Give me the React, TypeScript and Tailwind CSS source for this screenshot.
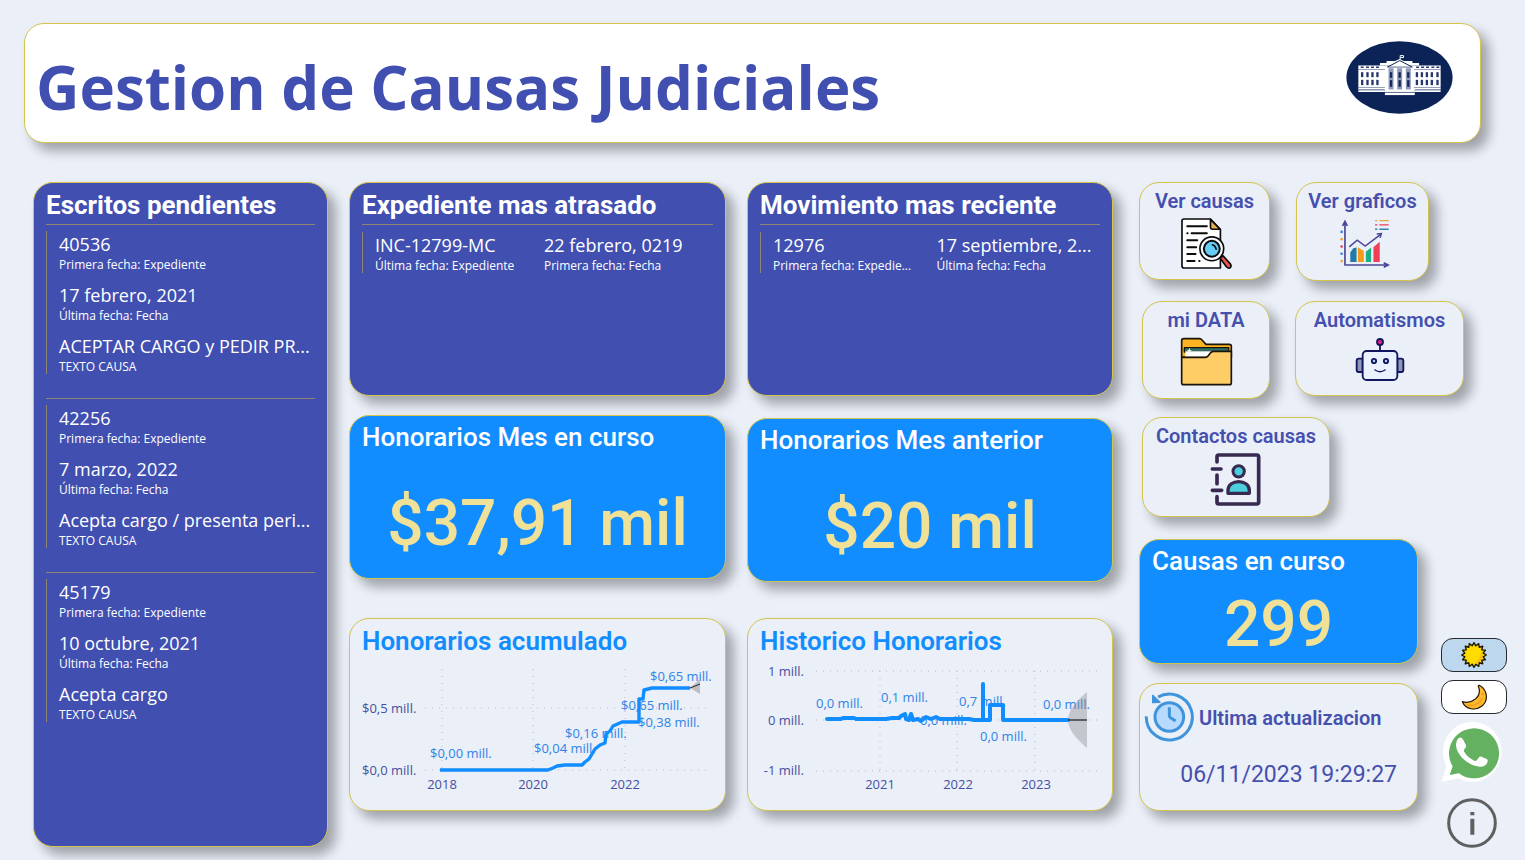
import type { ReactNode } from "react";

const segoe = "font-['Open_Sans',sans-serif]";
const cardBase = "rounded-[20px] border border-[#d3c44c] shadow-[8px_8px_12px_rgba(0,0,0,0.32)]";

type Field = { value: string; label: string };

const pendientes: Field[][] = [
  [
    { value: "40536", label: "Primera fecha: Expediente" },
    { value: "17 febrero, 2021", label: "Última fecha: Fecha" },
    { value: "ACEPTAR CARGO y PEDIR PR...", label: "TEXTO CAUSA" },
  ],
  [
    { value: "42256", label: "Primera fecha: Expediente" },
    { value: "7 marzo, 2022", label: "Última fecha: Fecha" },
    { value: "Acepta cargo / presenta peri...", label: "TEXTO CAUSA" },
  ],
  [
    { value: "45179", label: "Primera fecha: Expediente" },
    { value: "10 octubre, 2021", label: "Última fecha: Fecha" },
    { value: "Acepta cargo", label: "TEXTO CAUSA" },
  ],
];

function FieldView({ value, label }: Field) {
  return (
    <div className={`min-w-0 flex-1 whitespace-nowrap text-white ${segoe}`}>
      <p className="text-[18px] leading-[27px]">{value}</p>
      <p className="text-[12px] leading-[14px]">{label}</p>
    </div>
  );
}

function ListCard({ title, className, children }: { title: string; className: string; children: ReactNode }) {
  return (
    <section className={`bg-[#414fb1] px-3 pt-[6px] ${cardBase} ${className}`}>
      <h2 className="mb-[3px] text-[26px] leading-8 font-bold whitespace-nowrap text-white">{title}</h2>
      {children}
    </section>
  );
}

function RowRecord({ fields }: { fields: Field[] }) {
  return (
    <div className="border-t border-[#8f8672] pt-[7px]">
      <div className="flex border-l border-[#8f8672] pl-3">
        {fields.map((f) => (
          <FieldView key={f.label} {...f} />
        ))}
      </div>
    </div>
  );
}

function MoneyCard({ title, value }: { title: string; value: string }) {
  return (
    <section className={`flex h-[164px] flex-col bg-[#118dff] px-3 pt-[5px] ${cardBase}`}>
      <h2 className="text-[26px] leading-8 font-medium whitespace-nowrap text-white">{title}</h2>
      <p className="flex flex-1 items-center justify-center pt-4 text-[64px] leading-[72px] font-medium whitespace-nowrap text-[#f0e199]">
        {value}
      </p>
    </section>
  );
}

function ChartCard({ title, children }: { title: string; children: ReactNode }) {
  return (
    <section className={`h-[193px] bg-[#eaeff8] ${cardBase}`}>
      <h2 className="px-3 pt-[5px] pb-px text-[26px] leading-[34px] font-semibold whitespace-nowrap text-[#118dff]">{title}</h2>
      {children}
    </section>
  );
}

type Label = { x: number; y: number; t: string };

function ChartTexts({ items, anchor, fill }: { items: Label[]; anchor: "start" | "middle" | "end"; fill: string }) {
  return (
    <g fill={fill} textAnchor={anchor} className={`text-[13px] ${segoe}`}>
      {items.map((l) => (
        <text key={`${l.x}-${l.y}`} x={l.x} y={l.y}>
          {l.t}
        </text>
      ))}
    </g>
  );
}

function AcumuladoChart() {
  return (
    <svg viewBox="0 0 375 140" className="block w-full" role="img" aria-label="Honorarios acumulado">
      <path
        d="M92 10V112M183 10V112M275 10V112M75 49H361M75 111H361"
        stroke="#c9ccd6"
        strokeDasharray="1 6"
        strokeWidth="1.5"
        fill="none"
      />
      <ChartTexts
        anchor="start"
        fill="#2f84e6"
        items={[
          { x: 300, y: 22, t: "$0,65 mill." },
          { x: 271, y: 51, t: "$0,65 mill." },
          { x: 288, y: 68, t: "$0,38 mill." },
          { x: 215, y: 79, t: "$0,16 mill." },
          { x: 184, y: 94, t: "$0,04 mill." },
          { x: 80, y: 99, t: "$0,00 mill." },
        ]}
      />
      <path d="M340 29L350 20V35Z" fill="#bfbfc3" />
      <path
        d="M90 111H198L203 109L207 107L215 106H232L235 103L239 100L242 95L245 90L250 86L255 84L256 75L260 72L263 67L272 63H289V40H293L294 31L302 29H340"
        stroke="#118dff"
        strokeWidth="3.4"
        strokeLinejoin="round"
        fill="none"
      />
      <path d="M340 29L350 25" stroke="#222" />
      <ChartTexts
        anchor="start"
        fill="#464f9f"
        items={[
          { x: 12, y: 54, t: "$0,5 mill." },
          { x: 12, y: 116, t: "$0,0 mill." },
        ]}
      />
      <ChartTexts
        anchor="middle"
        fill="#464f9f"
        items={[
          { x: 92, y: 130, t: "2018" },
          { x: 183, y: 130, t: "2020" },
          { x: 275, y: 130, t: "2022" },
        ]}
      />
    </svg>
  );
}

function HistoricoChart() {
  return (
    <svg viewBox="0 0 364 140" className="block w-full" role="img" aria-label="Historico Honorarios">
      <path
        d="M132 12V112M209 12V112M287 12V112M68 12H352M68 61H352M68 112H352"
        stroke="#c9ccd6"
        strokeDasharray="1 6"
        strokeWidth="1.5"
        fill="none"
      />
      <ChartTexts
        anchor="start"
        fill="#2f84e6"
        items={[
          { x: 68, y: 49, t: "0,0 mill." },
          { x: 133, y: 43, t: "0,1 mill." },
          { x: 211, y: 47, t: "0,7 mill." },
          { x: 172, y: 66, t: "0,0 mill." },
          { x: 232, y: 82, t: "0,0 mill." },
          { x: 295, y: 50, t: "0,0 mill." },
        ]}
      />
      <path d="M320 61C320 52 328 42 339 33V89C328 80 320 70 320 61Z" fill="#8a8a8a" fillOpacity="0.4" />
      <path
        d="M79 60H93L95 59H106L108 60H138L144 59H151L153 57L157 55L158 60L161 61L163 55L165 61L170 60L173 62L178 58L183 60L188 58L192 60H221L226 61H235V25V61H242V46H255V61H320"
        stroke="#118dff"
        strokeWidth="4"
        strokeLinejoin="round"
        strokeLinecap="round"
        fill="none"
      />
      <path d="M320 61H339" stroke="#333" strokeWidth="1.4" />
      <ChartTexts
        anchor="end"
        fill="#464f9f"
        items={[
          { x: 56, y: 17, t: "1 mill." },
          { x: 56, y: 66, t: "0 mill." },
          { x: 56, y: 116, t: "-1 mill." },
        ]}
      />
      <ChartTexts
        anchor="middle"
        fill="#464f9f"
        items={[
          { x: 132, y: 130, t: "2021" },
          { x: 210, y: 130, t: "2022" },
          { x: 288, y: 130, t: "2023" },
        ]}
      />
    </svg>
  );
}

function Tile({ label, className, children }: { label: string; className: string; children: ReactNode }) {
  return (
    <button
      type="button"
      className={`flex flex-col items-center bg-[#eaeff8] pt-[6px] text-[20px] leading-6 font-semibold whitespace-nowrap text-[#464fae] ${cardBase} ${className}`}
    >
      {label}
      {children}
    </button>
  );
}

function Logo() {
  const parapets = [62, 78, 93, 108, 229, 244, 259, 275, 290];
  const windows = [63, 79, 94, 109, 228, 243, 258, 273, 290];
  return (
    <svg viewBox="18 18 322 220" className="h-[73px] w-[107px]" role="img" aria-label="Logo">
      <ellipse cx="179" cy="128" rx="160" ry="109" fill="#0c2357" />
      <path d="M120 84H140V78H166L179 72L192 78H218V84H238V92H120Z" fill="#fff" />
      <path d="M55 92H303V166H55Z" fill="#fff" />
      <path d="M55 104H303M55 158H303" stroke="#5a6a92" strokeWidth="2" />
      <path d="M142 97L180 77L218 97Z" fill="#fff" stroke="#0c2357" strokeWidth="3" />
      <path d="M181 75V62H191V68H182" stroke="#fff" strokeWidth="3" fill="none" />
      {parapets.map((x) => (
        <rect key={x} x={x} y="95" width="9" height="4" fill="#0c2357" />
      ))}
      {windows.map((x) => (
        <g key={x} fill="#26356b">
          <rect x={x} y="112" width="7" height="15" />
          <rect x={x} y="135" width="7" height="16" />
        </g>
      ))}
      <path d="M135 98H223V168H135Z" fill="#fff" />
      {[146, 172, 198].map((x) => (
        <g key={x}>
          <rect x={x} y="100" width="15" height="64" fill="#8f9abb" />
          <rect x={x + 4} y="112" width="7" height="17" fill="#17285f" />
          <rect x={x + 4} y="136" width="7" height="20" fill="#17285f" />
        </g>
      ))}
      <path d="M135 166H225V181H135Z" fill="#fff" />
      <path d="M55 165H134M226 165H303M135 173H225" stroke="#0c2357" strokeWidth="2" />
      <path d="M55 169H135M225 169H303" stroke="#fff" strokeWidth="5" />
    </svg>
  );
}

function DocSearchIcon() {
  return (
    <svg viewBox="148 650 160 160" className="mt-1 ml-1 size-[53px]" aria-hidden="true" strokeLinecap="round" strokeLinejoin="round">
      <path d="M160 656H240L270 688V804H160Q154 804 154 798V662Q154 656 160 656Z" fill="#fff" stroke="#0b0b0b" strokeWidth="5" />
      <path d="M240 657V682Q240 687 245 687H269Z" fill="#e3ac52" stroke="#0b0b0b" strokeWidth="5" />
      <path
        d="M170 678H229M170 699H171M183 699H229M170 720H200M170 741H197M170 762H195M170 783H192M206 783H207"
        stroke="#0b0b0b"
        strokeWidth="6"
      />
      <path d="M269 774L278 767L301 793Q304 801 298 804Q292 805 288 800Z" fill="#ef5350" stroke="#0b0b0b" strokeWidth="5" />
      <circle cx="244" cy="746" r="36" fill="#f6f9ff" stroke="#0b0b0b" strokeWidth="5" />
      <circle cx="244" cy="746" r="24" fill="#64ccf5" stroke="#0b0b0b" strokeWidth="6" />
      <path d="M246 734Q255 737 257 747" stroke="#0b0b0b" strokeWidth="5" fill="none" />
    </svg>
  );
}

function GraphIcon() {
  return (
    <svg viewBox="624 654 154 152" className="mt-[5px] ml-1 size-[51px]" aria-hidden="true">
      <path d="M658 757L667 744L677 742V786H658Z" fill="#217aa8" />
      <path d="M681 741L699 753V786H681Z" fill="#f59a1b" />
      <path d="M705 755L721 742V786H705Z" fill="#1fae86" />
      <path d="M728 741L747 725V786H728Z" fill="#ef3f56" />
      <path d="M642 796V664M635 677L642 663L649 677M640 795H772M759 788L773 795L759 802" stroke="#4b4796" strokeWidth="5" fill="none" />
      <path d="M655 740L679 720L703 738L748 704M738 701L752 700L748 713" stroke="#4b4796" strokeWidth="4.5" fill="none" />
      <path d="M733 661H740M746 661H774" stroke="#e8a33c" strokeWidth="4" />
      <path d="M733 674H740M746 674H774" stroke="#ef3f56" strokeWidth="4" />
      <path d="M733 687H740M746 687H774" stroke="#2f86b5" strokeWidth="4" />
      <circle cx="632" cy="695" r="4" fill="#3482d8" />
      <circle cx="632" cy="717" r="4" fill="#eda63c" />
      <circle cx="632" cy="739" r="4" fill="#ef3f56" />
      <circle cx="632" cy="761" r="4" fill="#3482d8" />
      <circle cx="632" cy="783" r="4" fill="#eda63c" />
    </svg>
  );
}

function FolderIcon() {
  return (
    <svg viewBox="150 147 159 147" className="mt-[5px] h-[49px] w-[53px]" aria-hidden="true" strokeLinejoin="round">
      <path d="M155 158Q155 152 161 152H208Q213 152 216 156L228 169H298Q304 169 304 175V208H155Z" fill="#feb322" stroke="#1b1508" strokeWidth="5" />
      <path d="M163 179H296V192H163Z" fill="#2f6f66" stroke="#1b1508" strokeWidth="4" />
      <path d="M166 190H290V206H166Z" fill="#fff" />
      <path d="M178 181V194M172 188H184" stroke="#fff" strokeWidth="3" />
      <path
        d="M155 208H226Q231 208 234 204L243 193Q246 190 250 190H304V284Q304 290 298 290H161Q155 290 155 284Z"
        fill="#fecd66"
        stroke="#1b1508"
        strokeWidth="5"
      />
    </svg>
  );
}

function RobotIcon() {
  return (
    <svg viewBox="676 142 150 135" className="mt-[5px] h-[45px] w-[50px]" aria-hidden="true" stroke="#12175e" strokeWidth="5.5">
      <path d="M751 166V184" />
      <circle cx="751" cy="157" r="9" fill="#e5237c" />
      <path d="M699 207H687Q681 207 681 213V241Q681 247 687 247H699ZM803 207H815Q821 207 821 213V241Q821 247 815 247H803Z" fill="#8f98b8" />
      <rect x="699" y="184" width="104" height="87" rx="12" fill="#eaf2ff" />
      <circle cx="733" cy="214" r="6.5" fill="#a9d5f5" />
      <circle cx="769" cy="214" r="6.5" fill="#a9d5f5" />
      <path d="M736 241Q751 251 766 241" fill="none" strokeLinecap="round" strokeWidth="4.5" />
    </svg>
  );
}

function ContactIcon() {
  return (
    <svg viewBox="244 486 156 165" className="mt-1 h-[55px] w-[52px]" aria-hidden="true" fill="none" stroke="#37294f" strokeWidth="11" strokeLinecap="round">
      <path d="M265 516V500Q265 495 270 495H384Q390 495 390 501V636Q390 642 384 642H270Q265 642 265 637V620M265 555V581M251 537H277M251 601H279" />
      <circle cx="330" cy="544" r="17" fill="#4ccfdf" strokeWidth="9" />
      <path d="M298 610V601C298 566 362 566 362 601V610Z" fill="#4ccfdf" strokeWidth="10" strokeLinejoin="round" />
    </svg>
  );
}

function HistoryIcon() {
  return (
    <svg viewBox="40 486 153 153" className="size-[51px] shrink-0" aria-hidden="true" fill="none" stroke="#3f94dc" strokeWidth="9">
      <path d="M47 559A69 69 0 1 0 82 501" />
      <path d="M66 496V518L88 517Z" fill="#3f94dc" strokeWidth="4" strokeLinejoin="round" />
      <circle cx="116" cy="561" r="43" fill="#b9daff" />
      <path d="M116 532V556Q116 560 119 563L135 573" />
    </svg>
  );
}

function SunIcon() {
  const points = Array.from({ length: 32 }, (_, i) => {
    const r = i % 2 === 0 ? 37 : 28;
    const a = (i * Math.PI) / 16;
    return `${(39 + r * Math.cos(a)).toFixed(1)},${(39 + r * Math.sin(a)).toFixed(1)}`;
  }).join(" ");
  return (
    <svg viewBox="0 0 78 78" className="size-[26px]" aria-hidden="true">
      <polygon points={points} fill="#ffdc00" stroke="#1a1500" strokeWidth="4" strokeLinejoin="round" />
      <path d="M39 65A26 26 0 0 0 62 28Q55 58 39 65Z" fill="#f9b91f" />
    </svg>
  );
}

function MoonIcon() {
  return (
    <svg viewBox="990 462 78 78" className="size-[26px]" aria-hidden="true">
      <path
        d="M1045 466C1070 480 1073 511 1053 528C1034 543 1004 539 994 515C1022 523 1055 500 1042 469Q1042 465 1045 466Z"
        fill="#fdb82c"
        stroke="#20170a"
        strokeWidth="3.5"
        strokeLinejoin="round"
      />
      <path d="M1008 524Q1036 534 1055 504" stroke="#f39a1c" strokeWidth="4" fill="none" />
      <circle cx="1055" cy="492" r="3" fill="#e98c1d" />
    </svg>
  );
}

function WhatsAppIcon() {
  return (
    <svg viewBox="936 576 186 192" className="mr-1 h-[64px] w-[62px]" aria-hidden="true">
      <path d="M938 763L952 713A88 90 0 1 1 987 750Z" fill="#fff" />
      <path d="M962 741L971 715A75 75 0 1 1 990 736Z" fill="#64b161" />
      <path
        d="M989 630Q998 626 1003 636L1011 652Q1013 657 1006 664Q1003 668 1006 672Q1017 690 1036 698Q1041 700 1044 696L1050 688Q1053 684 1058 686L1073 693Q1077 695 1076 700Q1072 717 1052 716Q1022 713 999 689Q980 667 981 648Q982 635 989 630Z"
        fill="#fff"
      />
    </svg>
  );
}

function InfoIcon() {
  return (
    <svg viewBox="0 0 150 150" className="mr-1 size-[50px]" aria-hidden="true">
      <circle cx="75" cy="75" r="70" fill="none" stroke="#5f5f5f" strokeWidth="9" />
      <path d="M70 42H82V52H70ZM70 62H82V110H70Z" fill="#5f5f5f" />
    </svg>
  );
}

export default function App() {
  return (
    <div className="min-h-screen bg-[#eaeff8] pb-3 font-[Roboto,sans-serif]">
      <div className="pt-[23px] pr-11 pl-6">
        <header className={`flex h-[120px] items-center justify-between bg-white pr-[27px] pl-[11px] ${cardBase}`}>
          <h1 className={`pt-2 text-[60px] leading-[80px] font-bold whitespace-nowrap text-[#414fb1] ${segoe}`}>
            Gestion de Causas Judiciales
          </h1>
          <div className="pb-3">
            <Logo />
          </div>
        </header>
      </div>

      <main className="grid grid-cols-[295fr_377fr_366fr_373fr] gap-x-[21px] pt-[39px] pr-[18px] pl-[33px]">
        <ListCard title="Escritos pendientes" className="h-[665px]">
          {pendientes.map((record) => (
            <div key={record[0].value} className="border-t border-[#8f8672] pt-[6px] pb-6">
              <div className="flex flex-col gap-[10px] border-l border-[#8f8672] pl-3">
                {record.map((f) => (
                  <FieldView key={f.label} {...f} />
                ))}
              </div>
            </div>
          ))}
        </ListCard>

        <div className="flex min-w-0 flex-col">
          <ListCard title="Expediente mas atrasado" className="mb-[19px] h-[214px]">
            <RowRecord
              fields={[
                { value: "INC-12799-MC", label: "Última fecha: Expediente" },
                { value: "22 febrero, 0219", label: "Primera fecha: Fecha" },
              ]}
            />
          </ListCard>
          <MoneyCard title="Honorarios Mes en curso" value="$37,91 mil" />
          <div className="pt-[39px]">
            <ChartCard title="Honorarios acumulado">
              <AcumuladoChart />
            </ChartCard>
          </div>
        </div>

        <div className="flex min-w-0 flex-col">
          <ListCard title="Movimiento mas reciente" className="mb-[22px] h-[214px]">
            <RowRecord
              fields={[
                { value: "12976", label: "Primera fecha: Expedie..." },
                { value: "17 septiembre, 2...", label: "Última fecha: Fecha" },
              ]}
            />
          </ListCard>
          <MoneyCard title="Honorarios Mes anterior" value="$20 mil" />
          <div className="pt-9">
            <ChartCard title="Historico Honorarios">
              <HistoricoChart />
            </ChartCard>
          </div>
        </div>

        <div className="flex min-w-0 flex-col pl-[5px]">
          <nav className="flex flex-col">
            <div className="flex items-start gap-[26px]">
              <Tile label="Ver causas" className="h-[98px] w-[131px]">
                <DocSearchIcon />
              </Tile>
              <Tile label="Ver graficos" className="h-[99px] w-[133px]">
                <GraphIcon />
              </Tile>
            </div>
            <div className="flex items-end gap-[25px] pt-5 pl-[3px]">
              <Tile label="mi DATA" className="h-[98px] w-[128px]">
                <FolderIcon />
              </Tile>
              <div className="self-start">
                <Tile label="Automatismos" className="h-[95px] w-[169px]">
                  <RobotIcon />
                </Tile>
              </div>
            </div>
            <div className="pt-[18px] pl-[3px]">
              <Tile label="Contactos causas" className="h-[100px] w-[188px]">
                <ContactIcon />
              </Tile>
            </div>
          </nav>

          <div className="flex items-start justify-between pt-[22px]">
            <div className="flex w-[279px] flex-col gap-[19px]">
              <section className={`flex h-[125px] flex-col bg-[#118dff] px-3 pt-[5px] ${cardBase}`}>
                <h2 className="text-[26px] leading-8 font-medium whitespace-nowrap text-white">Causas en curso</h2>
                <p className="pt-3 text-center text-[64px] leading-[72px] font-medium text-[#f0e199]">299</p>
              </section>
              <section className={`h-[128px] bg-[#eaeff8] px-1 pt-2 ${cardBase}`}>
                <div className="flex items-center gap-1">
                  <HistoryIcon />
                  <h2 className="text-[20px] leading-6 font-semibold whitespace-nowrap text-[#464fae]">Ultima actualizacion</h2>
                </div>
                <p className="pt-4 pr-4 text-right text-[23px] leading-8 whitespace-nowrap text-[#464fae]">
                  06/11/2023 19:29:27
                </p>
              </section>
            </div>

            <div className="flex flex-col items-center pt-[99px]">
              <button
                type="button"
                aria-label="Modo claro"
                className="flex h-[34px] w-[66px] items-center justify-center rounded-[12px] border border-[#26292e] bg-[#bdd7ee]"
              >
                <SunIcon />
              </button>
              <button
                type="button"
                aria-label="Modo oscuro"
                className="mt-2 flex h-[34px] w-[66px] items-center justify-center rounded-[12px] border border-[#26292e] bg-white"
              >
                <MoonIcon />
              </button>
              <button type="button" aria-label="WhatsApp" className="mt-[6px]">
                <WhatsAppIcon />
              </button>
              <button type="button" aria-label="Información" className="mt-[14px]">
                <InfoIcon />
              </button>
            </div>
          </div>
        </div>
      </main>
    </div>
  );
}
